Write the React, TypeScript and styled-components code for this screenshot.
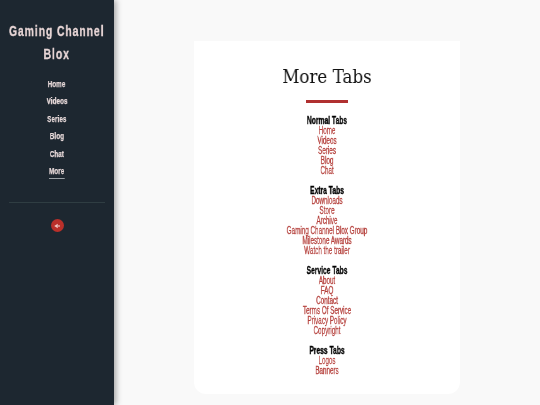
import styled, { createGlobalStyle } from "styled-components";

const sections = [
    { title: "Normal Tabs", links: ["Home", "Videos", "Series", "Blog", "Chat"] },
    {
        title: "Extra Tabs",
        links: ["Downloads", "Store", "Archive", "Gaming Channel Blox Group", "Milestone Awards", "Watch the trailer"],
    },
    { title: "Service Tabs", links: ["About", "FAQ", "Contact", "Terms Of Service", "Privacy Policy", "Copyright"] },
    { title: "Press Tabs", links: ["Logos", "Banners"] },
];

const navItems = ["Home", "Videos", "Series", "Blog", "Chat", "More"];

const App = () => {
    return (
        <Page>
            <GlobalStyle />
            <Sidebar>
                <Brand>
                    Gaming Channel
                    <br />
                    Blox
                </Brand>
                <Nav>
                    {navItems.map((item) => (
                        <NavItem key={item}>
                            <NavLink $active={item === "More"}>{item}</NavLink>
                        </NavItem>
                    ))}
                </Nav>
                <Divider />
                <ShareButton>
                    <svg width="6" height="6" viewBox="0 0 24 24" fill="#f0c8c4">
                        <path d="M1 12 15 3v18z" />
                        <rect x="17" y="9" width="6" height="6" />
                    </svg>
                </ShareButton>
            </Sidebar>
            <Main>
                <Card>
                    <Title>More Tabs</Title>
                    <Rule />
                    {sections.map((section) => (
                        <Section key={section.title}>
                            <SectionTitle>{section.title}</SectionTitle>
                            {section.links.map((link) => (
                                <TabLink key={link}>{link}</TabLink>
                            ))}
                        </Section>
                    ))}
                </Card>
            </Main>
        </Page>
    );
};

export default App;

const GlobalStyle = createGlobalStyle`
    html, body {
        margin: 0;
        padding: 0;
        background: #f9f9f9;
    }
`;

const Page = styled.div`
    display: flex;
    width: 540px;
    height: 405px;
    overflow: hidden;
    font-family: "Liberation Sans", sans-serif;
`;

const Sidebar = styled.aside`
    flex: 0 0 114px;
    min-width: 0;
    display: flex;
    flex-direction: column;
    align-items: center;
    box-sizing: border-box;
    padding-top: 19px;
    background: #1d2730;
    box-shadow: 2px 0 6px rgba(0, 0, 0, 0.35);
`;

const Brand = styled.h1`
    margin: 0;
    font-size: 15.5px;
    font-weight: 700;
    line-height: 23px;
    letter-spacing: 1.3px;
    text-align: center;
    white-space: nowrap;
    color: #e8d6d6;
    transform: scaleX(0.675);
    will-change: transform;
    -webkit-text-stroke: 0.3px #e8d6d6;
`;

const Nav = styled.nav`
    display: flex;
    flex-direction: column;
    align-items: center;
    margin-top: 12px;
`;

const NavItem = styled.div`
    height: 17.4px;
`;

const NavLink = styled.a<{ $active?: boolean }>`
    display: block;
    box-sizing: border-box;
    height: 15px;
    font-size: 9.5px;
    font-weight: 700;
    line-height: 14px;
    letter-spacing: 0.2px;
    color: #eadcdc;
    transform: scaleX(0.65);
    will-change: transform;
    -webkit-text-stroke: 0.25px #eadcdc;
    border-bottom: ${({ $active }) => ($active ? "1px solid #9aa0a5" : "0")};
`;

const Divider = styled.hr`
    width: 96px;
    margin: 21px 0 0;
    border: 0;
    border-top: 1px solid #2f3d42;
`;

const ShareButton = styled.button`
    display: flex;
    align-items: center;
    justify-content: center;
    width: 13px;
    height: 13px;
    margin-top: 16px;
    padding: 0;
    border: 0;
    border-radius: 50%;
    background: #b9302a;
`;

const Main = styled.main`
    flex: 1;
    display: flex;
    justify-content: center;
    padding-top: 41px;
`;

const Card = styled.section`
    box-sizing: border-box;
    width: 266px;
    height: 353px;
    padding-top: 22px;
    background: #ffffff;
    border-radius: 0 0 12px 12px;
    text-align: center;
`;

const Title = styled.h2`
    margin: 0;
    font-family: "DejaVu Serif", serif;
    font-size: 19px;
    font-weight: 400;
    line-height: 26px;
    color: #111111;
    transform: scaleX(0.88);
    will-change: transform;
`;

const Rule = styled.div`
    width: 42px;
    height: 3px;
    margin: 11px auto 13px;
    background: #b03030;
`;

const Section = styled.div`
    display: flex;
    flex-direction: column;
    margin-bottom: 10px;
    line-height: 10px;
    font-size: 10px;
`;

const SectionTitle = styled.strong`
    color: #000000;
    font-weight: 700;
    transform: scaleX(0.67);
    will-change: transform;
    -webkit-text-stroke: 0.35px #000000;
`;

const TabLink = styled.a`
    color: #b5403c;
    transform: scaleX(0.63);
    will-change: transform;
    -webkit-text-stroke: 0.3px #b5403c;
`;
